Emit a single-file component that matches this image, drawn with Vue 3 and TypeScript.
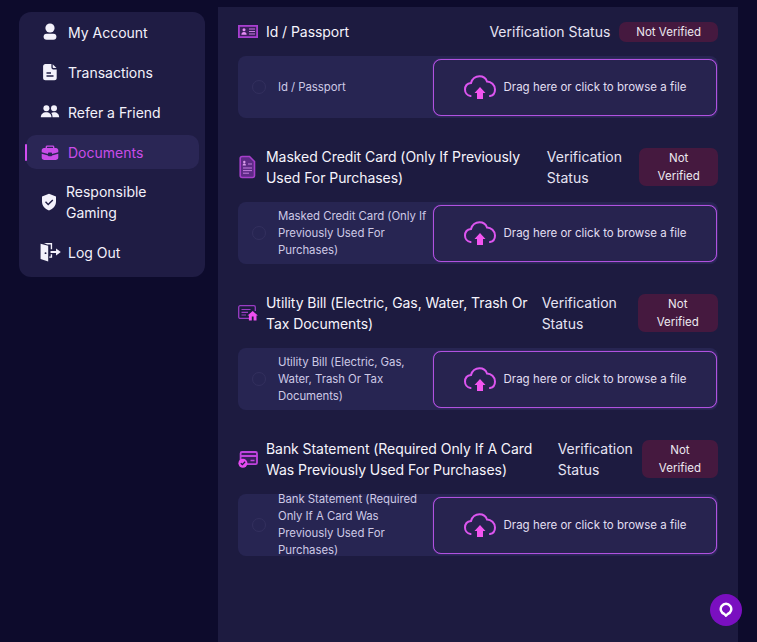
<script setup lang="ts">
const navItems = [
  { label: 'My Account', icon: 'user' },
  { label: 'Transactions', icon: 'file' },
  { label: 'Refer a Friend', icon: 'people' },
  { label: 'Documents', icon: 'case', active: true },
  { label: 'Responsible Gaming', icon: 'shield', small: true },
  { label: 'Log Out', icon: 'door' },
]

const documents = [
  { title: 'Id / Passport', icon: 'id' },
  { title: 'Masked Credit Card (Only If Previously Used For Purchases)', icon: 'card-doc' },
  { title: 'Utility Bill (Electric, Gas, Water, Trash Or Tax Documents)', icon: 'bill' },
  { title: 'Bank Statement (Required Only If A Card Was Previously Used For Purchases)', icon: 'bank' },
]
</script>

<template>
  <div class="page">
    <aside class="sidebar">
      <a v-for="item in navItems" :key="item.label" class="nav-item" :class="{ active: item.active }">
        <span class="nav-icon" :class="{ small: item.small }">
          <svg v-if="item.icon === 'user'" viewBox="0 0 18 18" fill="currentColor">
            <circle cx="9" cy="5" r="4.6" />
            <rect x="2.6" y="10.8" width="12.8" height="6" rx="3" />
          </svg>
          <svg v-else-if="item.icon === 'file'" viewBox="0 0 18 18" fill="currentColor">
            <path fill-rule="evenodd" d="M4.4 1h6v3.6c0 1 .8 1.8 1.800 1.800H15.700V15c0 1.300-1 2.300-2.300 2.300h-9C3.100 17.300 2.100 16.300 2.100 15V3.300C2.100 2 3.100 1 4.400 1ZM5.500 9.300v1.400h4.500V9.300ZM5.500 12.300v1.400h7V12.300Z" />
            <path d="M11.700 1.200l3.800 3.900h-3a.8.8 0 0 1-.8-.8Z" />
          </svg>
          <svg v-else-if="item.icon === 'people'" viewBox="0 0 18 18" fill="currentColor">
            <circle cx="5.400" cy="5.200" r="3" />
            <circle cx="13" cy="5.200" r="3" />
            <path d="M-.2 14.300c0-3 2.200-5 5.400-5 3.100 0 5.300 2 5.300 5Z" />
            <path d="M11.500 14.300c0-1.900-.4-3.200-1.300-4.300.8-.5 1.800-.7 2.800-.7 3.100 0 5.200 2 5.200 5Z" />
          </svg>
          <svg v-else-if="item.icon === 'case'" viewBox="0 0 18 18" fill="currentColor">
            <path d="M6.200 2.400h5.600c.9 0 1.600.7 1.600 1.600v.9H12V4.100a.4.400 0 0 0-.4-.4H6.400a.4.400 0 0 0-.4.400v.8H4.600V4c0-.9.7-1.600 1.600-1.600Z" />
            <path d="M3 4.900h12c1.300 0 2.300 1 2.300 2.300v2.100L11 10.900v-.7a.7.700 0 0 0-.7-.7H7.700a.7.700 0 0 0-.7.700v.7L.7 9.300V7.200C.7 5.900 1.700 4.900 3 4.900Z" />
            <path d="M.7 10.800 7 12.400v.2c0 .4.300.7.700.7h2.600c.4 0 .7-.3.700-.7v-.2l6.300-1.600v3.800c0 1.300-1 2.300-2.300 2.300H3C1.700 16.900.7 15.900.7 14.600Z" />
          </svg>
          <svg v-else-if="item.icon === 'shield'" viewBox="0 0 16 18" fill="currentColor">
            <path fill-rule="evenodd" d="M8 .8l7 2.600v5.200c0 4.200-2.800 7.300-7 8.800-4.200-1.500-7-4.600-7-8.800V3.400ZM11.300 6.500 7.200 10.400 5 8.300 4 9.300l3.200 3.100 5.100-4.900Z" />
          </svg>
          <svg v-else viewBox="1 .5 17 17" fill="currentColor">
            <path fill-rule="evenodd" d="M.6 1.300 7.800 3.200V18L.6 15.700ZM5.300 9.200a.9.900 0 1 0 0 1.800.9.900 0 0 0 0-1.800Z" />
            <path d="M3.800.6h7.700v5.700h-1.300V2H6.800ZM8.800 13.200h1.400v-2h1.300v3.300H8.800Z" />
            <path d="M10 8h5.200V5.800L19.700 9l-4.500 3.200V10H10Z" />
          </svg>
        </span>
        <span class="nav-label">{{ item.label }}</span>
      </a>
    </aside>

    <main class="content">
      <section v-for="doc in documents" :key="doc.title" class="doc">
        <header class="doc-head">
          <span class="doc-icon">
            <svg v-if="doc.icon === 'id'" viewBox="0 0 20 13">
              <rect x=".9" y=".9" width="18.200" height="11.200" fill="#3a1f5c" stroke="#a83fd0" stroke-width="1.800" />
              <circle cx="6" cy="4.700" r="1.500" fill="#e58cf5" />
              <path d="M3.400 9.800c0-2 1-2.900 2.600-2.900s2.600.9 2.600 2.900Z" fill="#e58cf5" />
              <path d="M11 4h6M11 6.500h6M11 9h6" stroke="#c77be0" stroke-width="1.100" />
            </svg>
            <svg v-else-if="doc.icon === 'card-doc'" viewBox="0 0 20 24">
              <path d="M4.200 1.500h7.300l5 5v14c0 1.100-.9 2-2 2H4.200c-1.100 0-2-.9-2-2v-17c0-1.100.9-2 2-2Z" fill="#5d2a86" stroke="#a63fca" stroke-width="1.600" />
              <circle cx="6.300" cy="7" r="1.200" fill="#d89ae9" />
              <path d="M4.700 10.400c0-1.200.6-1.800 1.600-1.800s1.600.6 1.600 1.800Z" fill="#d89ae9" />
              <path d="M10 9h4M5 13h9M5 15.600h9M5 18.200h6" stroke="#c47fde" stroke-width="1" />
            </svg>
            <svg v-else-if="doc.icon === 'bill'" viewBox="0 0 20 16">
              <path d="M11 13.300H2.200a1.400 1.400 0 0 1-1.500-1.400V2.200C.7 1.400 1.400.7 2.200.7h13.600c.8 0 1.500.7 1.500 1.500V6" fill="none" stroke="#9a3cc4" stroke-width="1.300" />
              <path d="M3.500 4.500h9M3.500 7.300h6.500M3.500 10h4.500" stroke="#9a3cc4" stroke-width="1.200" />
              <path fill-rule="evenodd" d="M15.300 5.800 20.500 10.300h-1.400v5H11.500v-5h-1.400ZM14.400 11.300v4h1.800v-4Z" fill="#f04ff0" transform="translate(-.6 .3)" />
            </svg>
            <svg v-else viewBox="0 0 20 17">
              <rect x="2.600" y="1" width="16.400" height="12.200" rx="1.400" fill="#3a1f5c" stroke="#c044de" stroke-width="1.800" />
              <path d="M2 5h17" stroke="#c044de" stroke-width="2" />
              <path d="M12.500 9.500h4" stroke="#c044de" stroke-width="1.500" />
              <circle cx="4.900" cy="12.200" r="4.500" fill="#e64bf0" />
              <path d="M2.800 12.200l1.600 1.500 2.700-2.900" fill="none" stroke="#1d1b40" stroke-width="1.300" />
            </svg>
          </span>
          <h2 class="doc-title">{{ doc.title }}</h2>
          <span class="status-label">Verification Status</span>
          <span class="status-badge">Not Verified</span>
        </header>

        <div class="doc-row">
          <span class="radio"></span>
          <span class="row-text">{{ doc.title }}</span>
          <div class="dropzone">
            <svg class="cloud" viewBox="0 0 32 24" fill="none">
              <path d="M6.500 21C3 20.500 1 17.500 1 14.500 1 11 3.500 8.500 7 8 8 4 11.500 1.200 15.500 1.200c3.500 0 6.500 2.300 7.500 5.300 4 0 8 3.500 8 8 0 3.500-2 6-5 6.500" stroke="#dc55ef" stroke-width="2" stroke-linecap="round" />
              <path d="M16 12l5.500 6H19v6h-6v-6h-2.500Z" fill="#f255f0" />
            </svg>
            <span class="drop-text">Drag here or click to browse a file</span>
          </div>
        </div>
      </section>
    </main>

    <button class="chat-btn" aria-label="Chat">
      <svg viewBox="0 0 16 18" width="14" height="16" fill="none">
        <path d="M8 15.600l-1.900-2A6 6 0 1 1 9.900 13.600Z" stroke="#fff" stroke-width="2.800" stroke-linejoin="round" />
      </svg>
    </button>
  </div>
</template>

<style scoped>
.page {
  position: relative;
  display: flex;
  align-items: flex-start;
  gap: 13px;
  height: 642px;
  padding: 7px 19px 0;
  box-sizing: border-box;
  overflow: hidden;
  background: #0d0b2c;
  color: #f3f1fb;
  font-family: Inter, "Open Sans", sans-serif;
}

/* sidebar */
.sidebar {
  flex: 0 0 186px;
  display: flex;
  flex-direction: column;
  gap: 6px;
  margin-top: 5px;
  padding: 3px 6px 8px 7px;
  box-sizing: border-box;
  border-radius: 12px;
  background: #1f1c44;
}

.nav-item {
  position: relative;
  display: flex;
  align-items: center;
  gap: 9px;
  min-height: 34px;
  padding: 6px 12px 6px 15px;
  box-sizing: border-box;
  border-radius: 10px;
  font-size: 14px;
  line-height: 21px;
  color: #f3f1fb;
}

.nav-item.active {
  background: #2a2655;
  color: #c94ce8;
}

.nav-item.active::before {
  content: "";
  position: absolute;
  left: -1px;
  top: 9px;
  width: 2px;
  height: 17px;
  border-radius: 1px;
  background: #d24cf0;
}

.nav-icon {
  flex: 0 0 18px;
  width: 18px;
  height: 18px;
}

.nav-icon.small {
  flex-basis: 16px;
  width: 16px;
}

.nav-icon svg {
  display: block;
  width: 100%;
  height: 100%;
  overflow: visible;
}

/* documents */
.content {
  flex: 0 0 520px;
  display: flex;
  flex-direction: column;
  gap: 28px;
  height: 635px;
  padding: 14px 20px 0;
  box-sizing: border-box;
  background: #1d1b40;
}

.doc-head {
  display: flex;
  align-items: center;
  margin-bottom: 14px;
}

.doc-icon {
  flex: 0 0 20px;
  width: 20px;
  margin-right: 8px;
}

.doc-icon svg {
  display: block;
  width: 100%;
  overflow: visible;
}

.doc-title {
  flex: 0 1 auto;
  margin: 0 auto 0 0;
  font-size: 14px;
  font-weight: 400;
  letter-spacing: -0.06px;
  line-height: 21px;
  color: #f6f4fc;
}

.status-label {
  flex: 0 1 auto;
  margin: 0 9px 0 8px;
  font-size: 14px;
  line-height: 21px;
  color: #e6e3f3;
}

.status-badge {
  flex: 0 1 auto;
  padding: 1px 17px;
  border-radius: 7px;
  background: #45193f;
  font-size: 11.500px;
  line-height: 18px;
  text-align: center;
  color: #ece8f0;
}

.doc-row {
  display: flex;
  align-items: center;
  height: 62px;
  padding-left: 14px;
  border-radius: 8px;
  background: #272552;
}

.radio {
  flex: 0 0 14px;
  height: 14px;
  margin-right: 12px;
  box-sizing: border-box;
  border: 1px solid #33305e;
  border-radius: 50%;
}

.row-text {
  flex: 1;
  font-size: 11.400px;
  letter-spacing: -0.05px;
  line-height: 17px;
  color: #cdc9e6;
}

.dropzone {
  flex: 0 0 284px;
  display: flex;
  align-items: center;
  justify-content: center;
  gap: 8px;
  height: 57px;
  margin-right: 1px;
  box-sizing: border-box;
  border: 1px solid #b052e0;
  border-radius: 8px;
  box-shadow: 0 0 1px #9140c4;
  background: #27234f;
}

.cloud {
  flex: 0 0 32px;
  height: 24px;
}

.drop-text {
  font-size: 11.500px;
  color: #e2dff2;
  white-space: nowrap;
}

.chat-btn {
  position: absolute;
  left: 710px;
  top: 594px;
  display: flex;
  align-items: center;
  justify-content: center;
  width: 32px;
  height: 32px;
  padding: 0;
  border: none;
  border-radius: 50%;
  background: #7a0fc0;
}
</style>
